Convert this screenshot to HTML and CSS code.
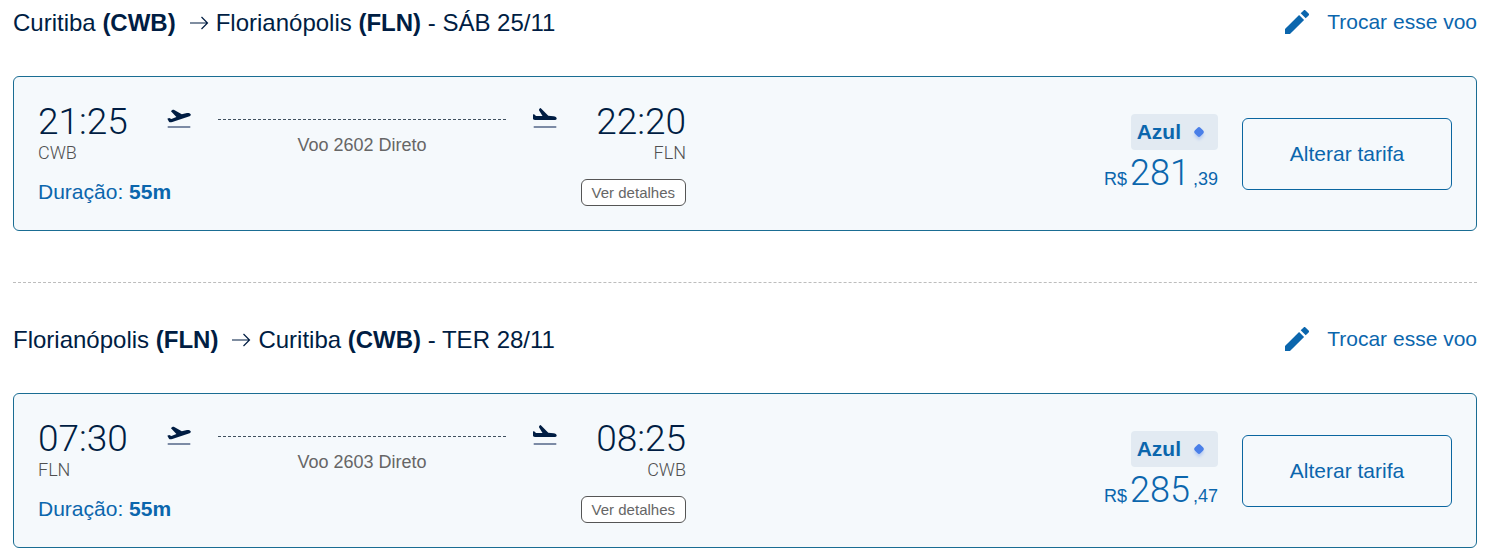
FILE: index.html
```html
<!DOCTYPE html>
<html lang="pt-BR">

<head>
  <meta charset="UTF-8">
  <title>Resumo dos voos</title>
  <link rel="stylesheet" href="styles.css">
</head>

<body>
  <!-- Ícones usados nos dois trechos -->
  <svg class="sprite" aria-hidden="true">
    <symbol id="arrow" viewBox="0 0 20 16">
      <path d="M1 8h17.500M12.500 2l6 6-6 6" fill="none" stroke="currentColor" stroke-width="1.200" />
    </symbol>
    <symbol id="pencil" viewBox="3 3 18 18">
      <path fill="currentColor" d="M3 17.250V21h3.750L17.300 10.450l-3.750-3.750zM20.710 7.040a1 1 0 0 0 0-1.410l-2.340-2.340a1 1 0 0 0-1.410 0l-2.200 2.200 3.750 3.750z" />
    </symbol>
    <symbol id="takeoff" viewBox="0 0 24 24">
      <path fill="#001d43" d="M.3 12.700l1.900-.6 2.200 1 5-2.200L4 5.200c.4-1 1.600-1.600 2.800-1.500l8 4.600 5.200-1.200c1.900-.3 3.500.3 3.800 1.500.1 1-.8 1.600-2 2L5.300 15.900c-1.600.5-2.700.6-3.300-.2z" />
      <path fill="#7c8ba5" d="M.7 20h22.600v2H.7z" />
    </symbol>
    <symbol id="landing" viewBox="0 0 24 24">
      <path fill="#001d43" d="M0 8.300l1.500.2 1.500 1.400h6.500L6 4.200C6 3 6.800 2 7.600 2l7.700 7.800 5.200.4c1.900.2 3.200 1.200 3.200 2.200 0 1-1.200 1.700-2.600 1.700L2 13.900c-1.500 0-2-.5-2-1.400z" />
      <path fill="#7c8ba5" d="M.7 20h22.600v2H.7z" />
    </symbol>
  </svg>

  <section class="flight">
    <div class="flight-header">
      <h2>Curitiba <b>(CWB)</b><svg class="arrow"><use href="#arrow" /></svg>Florianópolis <b>(FLN)</b> - SÁB 25/11</h2>
      <a href="#" class="change-link"><svg class="icon"><use href="#pencil" /></svg>Trocar esse voo</a>
    </div>
    <div class="card">
      <div class="itinerary">
        <div class="route">
          <div class="stop">
            <div class="time">21:25</div>
            <div class="code">CWB</div>
          </div>
          <svg class="icon plane"><use href="#takeoff" /></svg>
          <div class="path">Voo 2602 Direto</div>
          <svg class="icon plane"><use href="#landing" /></svg>
          <div class="stop arrival">
            <div class="time">22:20</div>
            <div class="code">FLN</div>
          </div>
        </div>
        <div class="info">
          <span>Duração: <b>55m</b></span>
          <button type="button" class="details">Ver detalhes</button>
        </div>
      </div>
      <div class="fare">
        <div class="badge">Azul <span class="diamond"></span></div>
        <div class="price"><span>R$</span><span class="amount">281</span><span>,39</span></div>
      </div>
      <button type="button" class="change-fare">Alterar tarifa</button>
    </div>
  </section>

  <hr>

  <section class="flight">
    <div class="flight-header">
      <h2>Florianópolis <b>(FLN)</b><svg class="arrow"><use href="#arrow" /></svg>Curitiba <b>(CWB)</b> - TER 28/11</h2>
      <a href="#" class="change-link"><svg class="icon"><use href="#pencil" /></svg>Trocar esse voo</a>
    </div>
    <div class="card">
      <div class="itinerary">
        <div class="route">
          <div class="stop">
            <div class="time">07:30</div>
            <div class="code">FLN</div>
          </div>
          <svg class="icon plane"><use href="#takeoff" /></svg>
          <div class="path">Voo 2603 Direto</div>
          <svg class="icon plane"><use href="#landing" /></svg>
          <div class="stop arrival">
            <div class="time">08:25</div>
            <div class="code">CWB</div>
          </div>
        </div>
        <div class="info">
          <span>Duração: <b>55m</b></span>
          <button type="button" class="details">Ver detalhes</button>
        </div>
      </div>
      <div class="fare">
        <div class="badge">Azul <span class="diamond"></span></div>
        <div class="price"><span>R$</span><span class="amount">285</span><span>,47</span></div>
      </div>
      <button type="button" class="change-fare">Alterar tarifa</button>
    </div>
  </section>
</body>

</html>
```
FILE: styles.css
```css
* {
  box-sizing: border-box;
}

body {
  font-family: "Liberation Sans", Arial, sans-serif;
  font-size: 21px;
  color: #0b66ad;
  background-color: #ffffff;
  margin: 0;
  padding: 8px 14px 7px 13px;
}

button {
  font-family: inherit;
  cursor: pointer;
}

.sprite {
  display: none;
}

.icon {
  width: 24px;
  height: 24px;
  flex-shrink: 0;
}

.flight-header {
  display: flex;
  justify-content: space-between;
  align-items: flex-start;
  margin-bottom: 38px;
}

h2 {
  margin: 0;
  font-size: 24px;
  font-weight: normal;
  line-height: 30px;
  color: #001d43;
}

.arrow {
  width: 20px;
  height: 16px;
  margin: 0 7px 0 13px;
}

.change-link {
  display: flex;
  align-items: center;
  gap: 18px;
  line-height: 28px;
  color: #0b66ad;
  text-decoration: none;
}

.card {
  display: flex;
  align-items: center;
  gap: 24px;
  padding: 24px;
  background-color: #f5f9fc;
  border: 1px solid #1a6d93;
  border-radius: 6px;
}

.itinerary {
  flex: 0 1 648px;
}

.route {
  display: flex;
  justify-content: space-between;
}

.stop {
  width: 90px;
  margin-right: 12px;
}

.arrival {
  margin: 0 0 0 12px;
  text-align: right;
}

.time,
.amount {
  font-family: Roboto, sans-serif;
  font-size: 36px;
  font-weight: 300;
  line-height: 42px;
}

.time {
  font-size: 37px;
  color: #001d43;
}

.code {
  font-family: Roboto, sans-serif;
  font-size: 18px;
  font-weight: 300;
  line-height: 20px;
  color: #505050;
}

.plane {
  margin-top: 5px;
}

.path {
  flex: 0 1 288px;
  margin-top: 18px;
  padding-top: 15px;
  border-top: 1px dashed #40505f;
  font-size: 18px;
  line-height: 20px;
  text-align: center;
  color: #666666;
}

.info {
  display: flex;
  justify-content: space-between;
  align-items: flex-start;
  margin-top: 16px;
  line-height: 25px;
}

.details {
  height: 27px;
  padding: 0 10px;
  font-size: 15px;
  color: #666666;
  background-color: #ffffff;
  border: 1px solid #555555;
  border-radius: 6px;
}

.fare {
  display: flex;
  flex-direction: column;
  align-items: flex-end;
  margin-left: auto;
}

.badge {
  display: flex;
  align-items: center;
  gap: 13px;
  padding: 0 14px 0 6px;
  font-weight: bold;
  line-height: 36px;
  background-color: #e2eaf2;
  border-radius: 4px;
}

.diamond {
  width: 8px;
  height: 8px;
  margin: 1px;
  background-color: #4a7fe8;
  border-radius: 2px;
  box-shadow: 2px 2px 3px #b9cdf2;
  transform: rotate(45deg);
}

.price {
  display: flex;
  align-items: baseline;
  gap: 3px;
  margin-top: 2px;
  font-size: 18px;
}

.change-fare {
  width: 210px;
  height: 72px;
  font-size: 21px;
  color: #0b66ad;
  background-color: transparent;
  border: 1px solid #0b66a0;
  border-radius: 6px;
}

hr {
  margin: 51px 0 42px;
  border: 0;
  border-top: 1px dashed #bdbdbd;
}
```
